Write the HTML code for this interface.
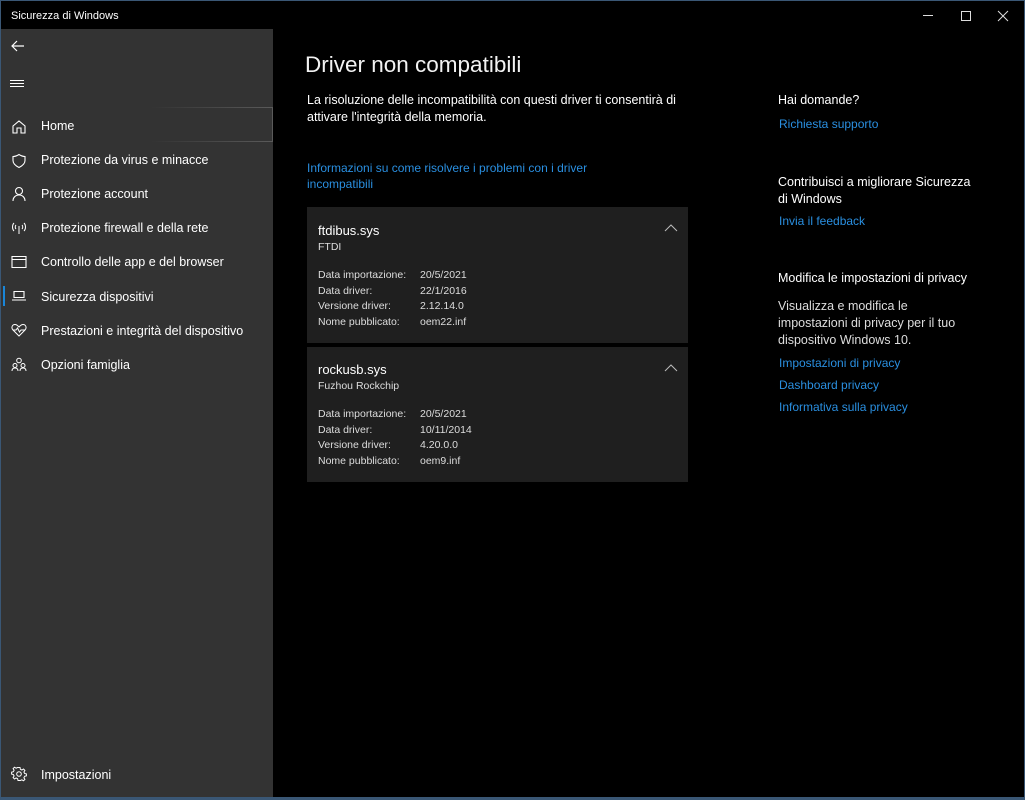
<!DOCTYPE html>
<html><head><meta charset="utf-8"><style>
*{margin:0;padding:0;box-sizing:border-box}
body{width:1025px;height:800px;background:#000;font-family:"Liberation Sans",sans-serif;color:#fff;position:relative;overflow:hidden}
.a{position:absolute;white-space:nowrap}
#frame{position:absolute;left:0;top:0;width:1025px;height:800px;border:1px solid #3a5775;border-bottom:3px solid #3a5775;pointer-events:none}
#side{position:absolute;left:1px;top:29px;width:272px;height:768px;background:#333}
.nav{font-size:12.5px;color:#fff;left:40px}
.ic{position:absolute;left:10px}
.link{color:#2a8fe0;font-size:12px}
.card{position:absolute;left:307px;width:381px;background:#1f1f1f}
.card .t{position:absolute;left:11px;font-size:13px;color:#fff}
.card .s{position:absolute;left:11px;font-size:10.5px;color:#ddd}
.card .k,.card .v{position:absolute;font-size:10.5px;color:#ddd;line-height:15.5px}
.card .k{left:11px}.card .v{left:113px}
</style></head><body>
<div class="a" style="left:11px;top:10px;font-size:11px">Sicurezza di Windows</div>
<svg class="a" style="left:918px;top:9px" width="100" height="14" viewBox="0 0 100 14" fill="none" stroke="#ddd" stroke-width="1"><path d="M5 6.5h10"/><path d="M43.5 2.5h9v9h-9z"/><path d="M80 2l10 10M90 2l-10 10"/></svg>
<div id="side">
<svg class="a" style="left:9px;top:10px" width="16" height="14" fill="none" stroke="#fff" stroke-width="1.2"><path d="M14 7H2M7 2L2 7l5 5"/></svg>
<svg class="a" style="left:9px;top:50px" width="16" height="10" fill="none" stroke="#fff" stroke-width="1"><path d="M0 1.5h14M0 4.5h14M0 7.5h14"/></svg>
<div class="a" style="left:150px;top:78px;width:122px;height:1px;background:linear-gradient(90deg,rgba(90,90,90,0),#5a5a5a)"></div>
<div class="a" style="left:150px;top:112px;width:122px;height:1px;background:linear-gradient(90deg,rgba(90,90,90,0),#5a5a5a)"></div>
<div class="a" style="left:271px;top:78px;width:1px;height:35px;background:#5a5a5a"></div>
<svg class="ic" style="top:90px" width="16" height="16" fill="none" stroke="#fff" stroke-width="1.1"><path d="M2 7l6-5 6 5v7H10V9H6v5H2z"/></svg>
<div class="a nav" style="top:90px">Home</div>
<svg class="ic" style="top:124px" width="16" height="16" fill="none" stroke="#fff" stroke-width="1.1"><path d="M8 1.5c2 1.3 4 2 6 2v4c0 3.5-3 5.5-6 7-3-1.5-6-3.5-6-7v-4c2 0 4-.7 6-2z"/></svg>
<div class="a nav" style="top:124px">Protezione da virus e minacce</div>
<svg class="ic" style="top:157px" width="16" height="16" fill="none" stroke="#fff" stroke-width="1.1"><circle cx="8" cy="5" r="3.5"/><path d="M2 15c0-3.5 2.5-6 6-6s6 2.5 6 6"/></svg>
<div class="a nav" style="top:158px">Protezione account</div>
<svg class="ic" style="top:192px" width="16" height="14" fill="none" stroke="#fff" stroke-width="1"><path d="M3 2c-2 2-2 6 0 8M5 4c-1 1-1 3 0 4M13 2c2 2 2 6 0 8M11 4c1 1 1 3 0 4M8 5v8"/></svg>
<div class="a nav" style="top:192px">Protezione firewall e della rete</div>
<svg class="ic" style="top:226px" width="16" height="14" fill="none" stroke="#fff" stroke-width="1.1"><path d="M1 1.5h14v11H1zM1 4.5h14"/></svg>
<div class="a nav" style="top:226px">Controllo delle app e del browser</div>
<div class="a" style="left:2px;top:257px;width:2px;height:20px;background:#1a86d8"></div>
<svg class="ic" style="top:261px" width="16" height="12" fill="none" stroke="#fff" stroke-width="1.1"><path d="M3 1.5h10v6H3zM1 10h14"/></svg>
<div class="a nav" style="top:261px">Sicurezza dispositivi</div>
<svg class="ic" style="top:294px" width="16" height="14" fill="none" stroke="#fff" stroke-width="1"><path d="M8 13L2 7C0 5 1 1.5 4 1.5c2 0 3 1.5 4 2.5 1-1 2-2.5 4-2.5 3 0 4 3.5 2 5.5z"/><path d="M2 7h3l1.5-2 2 4 1.5-2h4"/></svg>
<div class="a nav" style="top:295px">Prestazioni e integrità del dispositivo</div>
<svg class="ic" style="top:328px" width="16" height="15" fill="none" stroke="#fff" stroke-width="1"><circle cx="8" cy="3.5" r="2.3"/><circle cx="4" cy="8.5" r="2"/><circle cx="12" cy="8.5" r="2"/><path d="M1 14c0-2 1.3-3 3-3s3 1 3 3M9 14c0-2 1.3-3 3-3s3 1 3 3"/></svg>
<div class="a nav" style="top:329px">Opzioni famiglia</div>
<svg class="ic" style="top:737px" width="16" height="16" fill="none" stroke="#fff" stroke-width="1"><circle cx="8" cy="8" r="2.3"/><path d="M7 1.5h2l.4 1.8 1.5.7 1.6-1 1.4 1.4-1 1.6.7 1.5 1.8.4v2l-1.8.4-.7 1.5 1 1.6-1.4 1.4-1.6-1-1.5.7L9 14.5H7l-.4-1.8-1.5-.7-1.6 1-1.4-1.4 1-1.6L2.4 8.5.6 8.1v-2l1.8-.4.7-1.5-1-1.6 1.4-1.4 1.6 1 1.5-.7z"/></svg>
<div class="a nav" style="top:739px">Impostazioni</div>
</div>
<div class="a" style="left:305px;top:52px;font-size:22.5px;color:#f2f2f2">Driver non compatibili</div>
<div class="a" style="left:307px;top:92px;font-size:12.5px;line-height:17px;color:#fff">La risoluzione delle incompatibilità con questi driver ti consentirà di<br>attivare l'integrità della memoria.</div>
<div class="a link" style="left:307px;top:160px;line-height:16px">Informazioni su come risolvere i problemi con i driver<br>incompatibili</div>
<div class="card" style="top:207px;height:136px">
<div class="t" style="top:16px">ftdibus.sys</div><div class="s" style="top:34px">FTDI</div>
<svg class="a" style="left:357px;top:17px" width="14" height="8" fill="none" stroke="#bbb" stroke-width="1"><path d="M1 7l6-6 6 6"/></svg>
<div class="k" style="top:61px">Data importazione:<br>Data driver:<br>Versione driver:<br>Nome pubblicato:</div>
<div class="v" style="top:61px">20/5/2021<br>22/1/2016<br>2.12.14.0<br>oem22.inf</div>
</div>
<div class="card" style="top:347px;height:135px">
<div class="t" style="top:15px">rockusb.sys</div><div class="s" style="top:33px">Fuzhou Rockchip</div>
<svg class="a" style="left:357px;top:17px" width="14" height="8" fill="none" stroke="#bbb" stroke-width="1"><path d="M1 7l6-6 6 6"/></svg>
<div class="k" style="top:60px">Data importazione:<br>Data driver:<br>Versione driver:<br>Nome pubblicato:</div>
<div class="v" style="top:60px">20/5/2021<br>10/11/2014<br>4.20.0.0<br>oem9.inf</div>
</div>
<div class="a" style="left:778px;top:93px;font-size:12.5px">Hai domande?</div>
<div class="a link" style="left:779px;top:117px">Richiesta supporto</div>
<div class="a" style="left:778px;top:174px;font-size:12.5px;line-height:17px">Contribuisci a migliorare Sicurezza<br>di Windows</div>
<div class="a link" style="left:779px;top:214px">Invia il feedback</div>
<div class="a" style="left:778px;top:271px;font-size:12.5px">Modifica le impostazioni di privacy</div>
<div class="a" style="left:778px;top:298px;font-size:12.5px;line-height:17px;color:#ddd">Visualizza e modifica le<br>impostazioni di privacy per il tuo<br>dispositivo Windows 10.</div>
<div class="a link" style="left:779px;top:356px">Impostazioni di privacy</div>
<div class="a link" style="left:779px;top:378px">Dashboard privacy</div>
<div class="a link" style="left:779px;top:400px">Informativa sulla privacy</div>
<div id="frame"></div>
</body></html>
